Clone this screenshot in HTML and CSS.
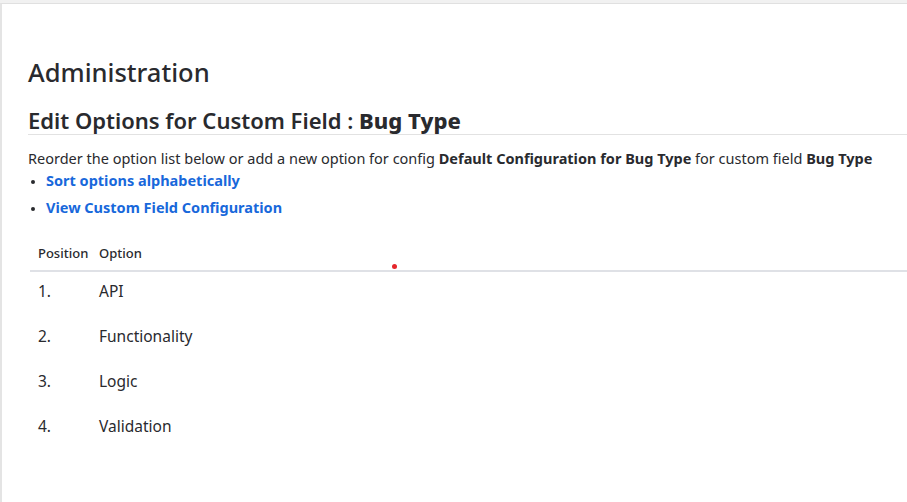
FILE: index.html
```html
<!DOCTYPE html>
<html>
<head>
<meta charset="utf-8">
<link rel="stylesheet" href="styles.css">
</head>
<body>
<div class="topstrip"></div>
<main class="panel">
  <h1 class="page-title">Administration</h1>
  <h2 class="section-title">Edit Options for Custom Field : <b>Bug Type</b></h2>
  <p class="intro">Reorder the option list below or add a new option for config <b>Default Configuration for Bug Type</b> for custom field <b>Bug Type</b></p>
  <ul class="links">
    <li><a href="#">Sort options alphabetically</a></li>
    <li><a href="#">View Custom Field Configuration</a></li>
  </ul>
  <div class="table-wrap">
    <table class="options">
      <thead>
        <tr><th class="pos">Position</th><th>Option</th></tr>
      </thead>
      <tbody>
        <tr><td class="pos">1.</td><td>API</td></tr>
        <tr><td class="pos">2.</td><td>Functionality</td></tr>
        <tr><td class="pos">3.</td><td>Logic</td></tr>
        <tr><td class="pos">4.</td><td>Validation</td></tr>
      </tbody>
    </table>
    <span class="marker"></span>
  </div>
</main>
</body>
</html>
```
FILE: styles.css
```css
html, body {
  margin: 0;
  padding: 0;
  background: #f3f3f3;
  height: 100%;
}
body {
  font-family: "Noto Sans", "Open Sans", sans-serif;
  color: #292a2e;
  overflow: hidden;
}
.topstrip {
  height: 3px;
  background: #f1f1f1;
}
.panel {
  background: #fff;
  border-top: 1px solid #e0e0e0;
  border-left: 2px solid #e4e4e4;
  height: 520px;
  box-sizing: border-box;
  padding: 50px 0 0 26px;
}
.page-title {
  margin: 0;
  font-size: 25.5px;
  font-weight: 500;
  line-height: 36px;
}
.section-title {
  margin: 16px 0 0 0;
  font-size: 22px;
  font-weight: 600;
  line-height: 28px;
  padding-bottom: 0;
  border-bottom: 1px solid #e2e2e2;
}
.section-title b {
  font-weight: 800;
}
.intro {
  margin: 12px 0 0 0;
  font-size: 14.5px;
  line-height: 22px;
}
.intro b {
  font-weight: 700;
}
.links {
  margin: 0;
  padding-left: 18px;
  font-size: 14.5px;
  line-height: 22px;
}
.links li {
  margin-top: 5px;
}
.links li:first-child {
  margin-top: 0;
}
.links li::marker {
  font-size: 12px;
}
.links a {
  color: #1868db;
  font-weight: 700;
  text-decoration: none;
}
.table-wrap {
  position: relative;
  margin-top: 18px;
  padding-left: 2px;
}
.options {
  width: 100%;
  border-collapse: collapse;
  font-size: 14px;
}
.options th {
  text-align: left;
  font-weight: 500;
  font-size: 13px;
  padding: 7px 2px 7px 8px;
  border-bottom: 2px solid #dfe1e6;
  line-height: 20px;
}
.options th.pos {
  width: 51px;
}
.options td {
  padding: 9px 2px 16px 8px;
  line-height: 20px;
  font-size: 15.5px;
}
.marker {
  position: absolute;
  left: 364px;
  top: 28px;
  width: 5px;
  height: 5px;
  border-radius: 50%;
  background: #e5262b;
}
```
